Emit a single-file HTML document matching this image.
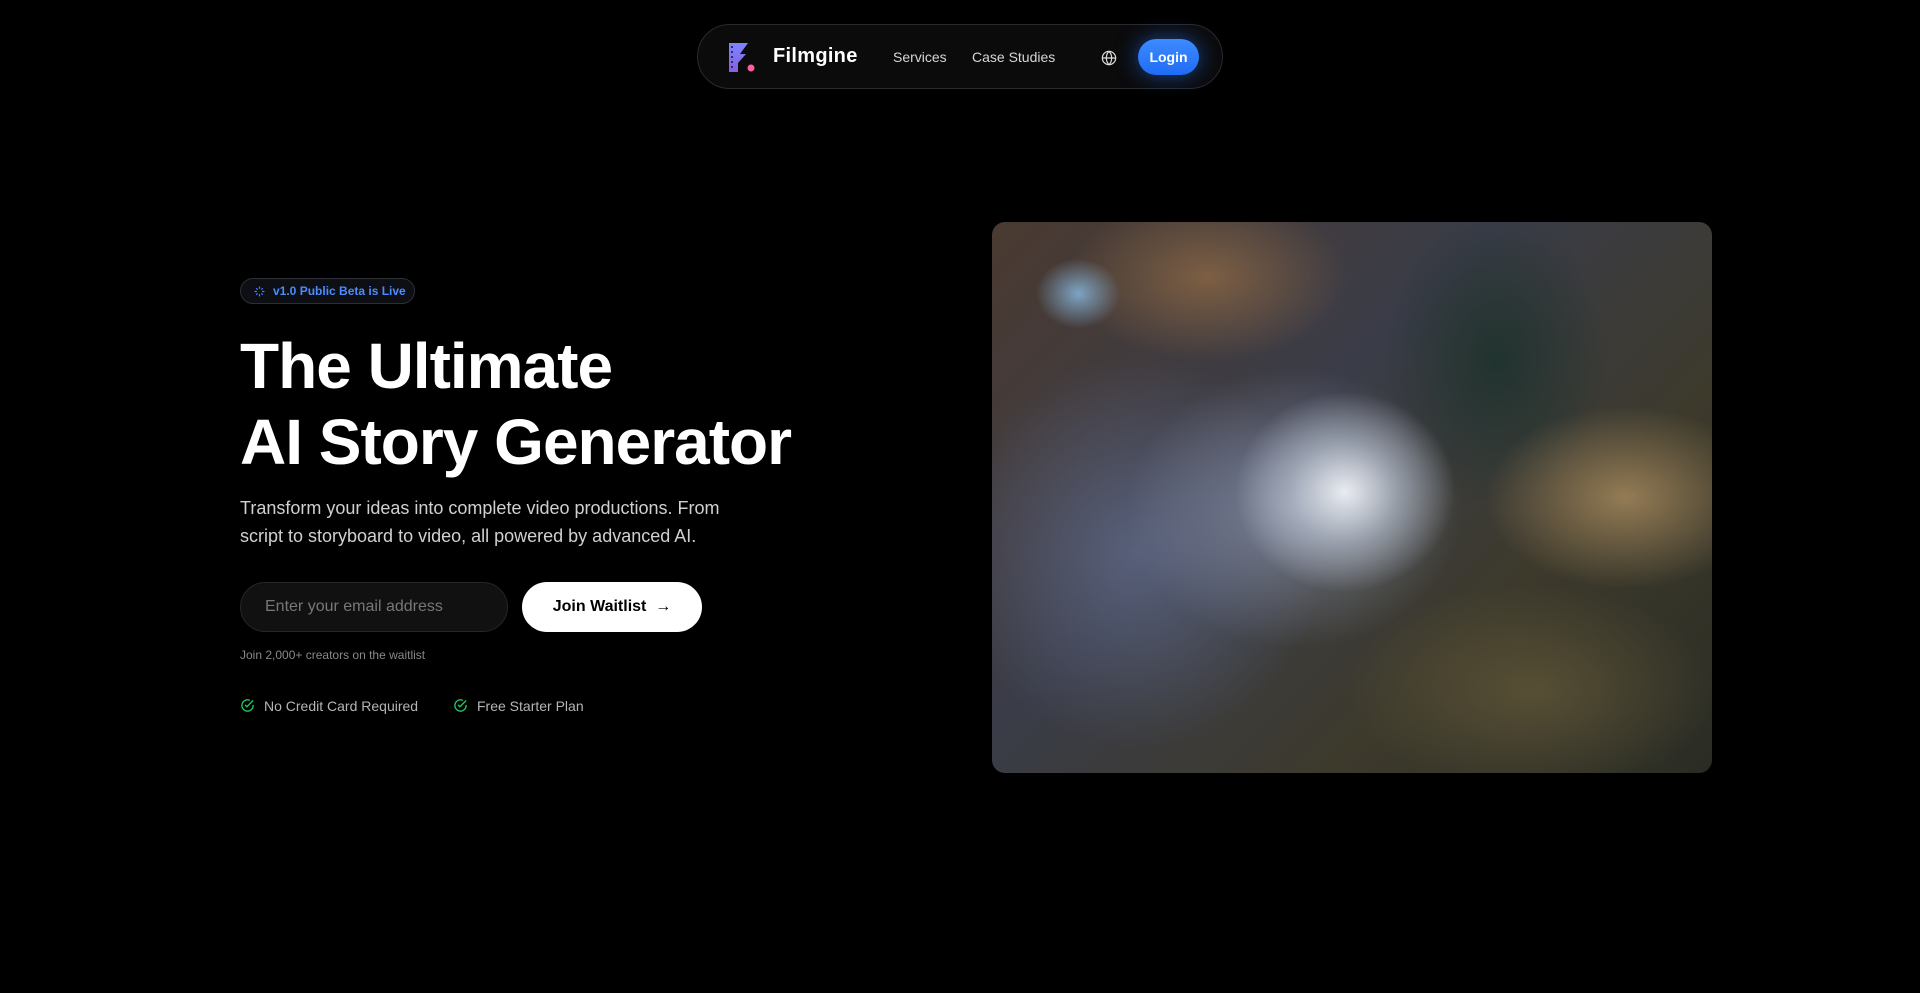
<!DOCTYPE html>
<html><head><meta charset="utf-8">
<style>
*{margin:0;padding:0;box-sizing:border-box}
html,body{width:1920px;height:993px;background:#000;overflow:hidden;font-family:"Liberation Sans",sans-serif;color:#fff}
.nav{position:absolute;left:697px;top:24px;width:526px;height:65px;border-radius:33px;background:#0b0b0c;border:1px solid #2a2a2d}
.brand{position:absolute;left:75px;top:20px;font-size:20px;font-weight:bold;letter-spacing:.3px}
.nl{position:absolute;top:24px;font-size:14px;color:#d6d6d6}
.login{position:absolute;left:440px;top:14px;width:61px;height:36px;border-radius:18px;background:linear-gradient(180deg,#3d8bff,#1f6cf5);box-shadow:0 0 22px rgba(40,120,255,.55);font-size:14px;font-weight:bold;text-align:center;line-height:36px}
.badge{position:absolute;left:240px;top:278px;width:175px;height:26px;border-radius:13px;border:1px solid #2c2f36;background:#0d0f14;color:#4b8dff;font-size:12px;font-weight:bold;line-height:24px;padding-left:32px}
h1{position:absolute;left:240px;top:328px;font-size:64px;line-height:76px;font-weight:bold;letter-spacing:-1px}
.p{position:absolute;left:240px;top:494px;width:520px;font-size:18px;line-height:28px;color:#d0d0d0}
.inp{position:absolute;left:240px;top:582px;width:268px;height:50px;border-radius:25px;background:#111;border:1px solid #262626;color:#777;font-size:16px;line-height:48px;padding-left:24px}
.btn{position:absolute;left:522px;top:582px;width:180px;height:50px;border-radius:25px;background:#fff;color:#000;font-size:16px;font-weight:bold;line-height:50px;text-align:center}
.small{position:absolute;left:240px;top:648px;font-size:12px;color:#888}
.chk{position:absolute;top:697px;font-size:14px;color:#b5b5b5;line-height:18px}
.chk svg{position:absolute;left:-24px;top:1px}
.img{position:absolute;left:992px;top:222px;width:720px;height:551px;border-radius:13px;overflow:hidden;
background:
radial-gradient(ellipse 110px 100px at 49% 49%,rgba(240,243,248,.95),rgba(200,210,225,.55) 50%,transparent 100%),
radial-gradient(ellipse 240px 200px at 42% 52%,rgba(170,180,205,.55),transparent 70%),
radial-gradient(ellipse 60px 50px at 12% 13%,rgba(140,190,230,.8),transparent 70%),
radial-gradient(ellipse 200px 130px at 88% 50%,rgba(170,140,95,.8),transparent 70%),
radial-gradient(ellipse 260px 150px at 75% 85%,rgba(95,85,55,.8),transparent 70%),
radial-gradient(ellipse 150px 200px at 70% 25%,rgba(30,50,45,.9),transparent 75%),
radial-gradient(ellipse 200px 120px at 30% 10%,rgba(150,110,70,.7),transparent 70%),
radial-gradient(ellipse 250px 260px at 20% 60%,rgba(95,105,135,.8),transparent 75%),
linear-gradient(135deg,#4a3a30,#3a3c48 40%,#3d3a2c 70%,#2a2c24);}
</style></head><body>
<div class="nav">
<svg style="position:absolute;left:30px;top:17px" width="30" height="32" viewBox="0 0 30 32">
<defs><linearGradient id="g" x1="0" y1="0" x2="0" y2="1"><stop offset="0" stop-color="#7a86ff"/><stop offset="1" stop-color="#8a5fe0"/></linearGradient></defs>
<path d="M1 1H20L12 12H18L10 21V30H1Z" fill="url(#g)"/>
<g fill="#2a2d6a"><rect x="3" y="4" width="2" height="2"/><rect x="3" y="9" width="2" height="2"/><rect x="3" y="14" width="2" height="2"/><rect x="3" y="19" width="2" height="2"/><rect x="3" y="24" width="2" height="2"/></g>
<circle cx="23" cy="26" r="3.5" fill="#ff5f9e"/>
</svg>
<div class="brand">Filmgine</div>
<div class="nl" style="left:195px">Services</div>
<div class="nl" style="left:274px">Case Studies</div>
<svg style="position:absolute;left:403px;top:25px" width="16" height="16" viewBox="0 0 24 24" fill="none" stroke="#ddd" stroke-width="1.8"><circle cx="12" cy="12" r="10"/><path d="M2 12h20M12 2c3 3 4 6.5 4 10s-1 7-4 10c-3-3-4-6.5-4-10s1-7 4-10z"/></svg>
<div class="login">Login</div>
</div>
<div class="badge"><svg style="position:absolute;left:12px;top:6px" width="13" height="13" viewBox="0 0 24 24" fill="none" stroke="#4b8dff" stroke-width="2.2"><path d="M12 3v4M12 17v4M3 12h4M17 12h4M6 6l2.5 2.5M15.5 15.5L18 18M6 18l2.5-2.5M15.5 8.5L18 6"/></svg>v1.0 Public Beta is Live</div>
<h1>The Ultimate<br>AI Story Generator</h1>
<div class="p">Transform your ideas into complete video productions. From script to storyboard to video, all powered by advanced AI.</div>
<div class="inp">Enter your email address</div>
<div class="btn">Join Waitlist &nbsp;→</div>
<div class="small">Join 2,000+ creators on the waitlist</div>
<div class="chk" style="left:264px"><svg width="15" height="15" viewBox="0 0 24 24" fill="none" stroke="#22c55e" stroke-width="2.2"><path d="M21 11v1a9 9 0 1 1-5.3-8.2"/><path d="M8 11l3 3 10-10"/></svg>No Credit Card Required</div>
<div class="chk" style="left:477px"><svg width="15" height="15" viewBox="0 0 24 24" fill="none" stroke="#22c55e" stroke-width="2.2"><path d="M21 11v1a9 9 0 1 1-5.3-8.2"/><path d="M8 11l3 3 10-10"/></svg>Free Starter Plan</div>
<div class="img"></div>
</body></html>
